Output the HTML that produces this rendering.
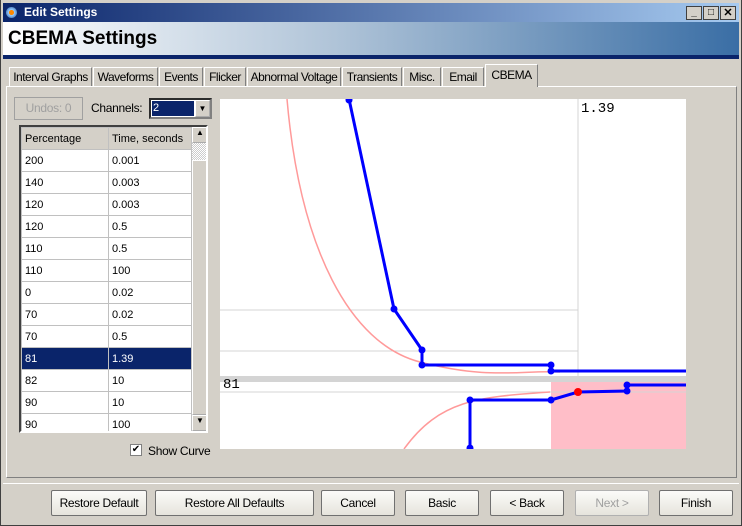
<!DOCTYPE html><html><head><style>
*{box-sizing:border-box;margin:0;padding:0}
body{width:742px;height:526px;background:#d4d0c8;font-family:"Liberation Sans",sans-serif;font-size:11px;position:relative;overflow:hidden;white-space:nowrap}
.a{position:absolute}
.btn{position:absolute;top:490px;height:26px;background:linear-gradient(#fbfbf9,#e6e4dc);border:1px solid #707070;border-radius:2px;text-align:center;line-height:24px;font-size:12px;letter-spacing:-0.3px}
.tab{position:absolute;top:67px;height:20px;border:1px solid #fff;border-right-color:#808080;border-bottom:none;line-height:18px;font-size:12px;letter-spacing:-0.5px;background:#d4d0c8;text-align:center;overflow:hidden}
table{border-collapse:collapse;font-size:11px}
td{border:1px solid #c0c0c0;height:22px;padding-left:3px;overflow:hidden}
</style></head><body>
<div class="a" style="left:0;top:0;width:742px;height:526px;border:1px solid #404040;border-top:none"></div>
<div class="a" style="left:3px;top:3px;width:736px;height:19px;background:linear-gradient(90deg,#0a246a,#a6caf0);color:#fff;font-weight:bold;font-size:12px;line-height:19px;padding-left:21px">Edit Settings</div>
<div class="a" style="left:6px;top:7px;width:11px;height:11px;border-radius:50%;background:radial-gradient(circle,#f80 30%,#9cf 35%,#36a 90%)"></div>
<div class="a" style="left:686px;top:6px;width:16px;height:14px;background:#d4d0c8;border:1px solid #404040;font-size:10px;text-align:center;line-height:12px;font-weight:bold">_</div>
<div class="a" style="left:703px;top:6px;width:16px;height:14px;background:#d4d0c8;border:1px solid #404040;font-size:10px;text-align:center;line-height:12px">□</div>
<div class="a" style="left:720px;top:6px;width:16px;height:14px;background:#d4d0c8;border:1px solid #404040;font-size:11px;text-align:center;line-height:12px;font-weight:bold">✕</div>
<div class="a" style="left:3px;top:22px;width:736px;height:33px;background:linear-gradient(90deg,#fff,#b0c4d8 45%,#3a6ea5);font-weight:bold;font-size:19px;line-height:33px;padding-left:5px">CBEMA Settings</div>
<div class="a" style="left:3px;top:55px;width:736px;height:4px;background:#0a246a"></div>
<div class="tab" style="left:9px;width:83px">Interval Graphs</div>
<div class="tab" style="left:93px;width:65px">Waveforms</div>
<div class="tab" style="left:159px;width:44px">Events</div>
<div class="tab" style="left:204px;width:42px">Flicker</div>
<div class="tab" style="left:247px;width:94px">Abnormal Voltage</div>
<div class="tab" style="left:342px;width:60px">Transients</div>
<div class="tab" style="left:403px;width:38px">Misc.</div>
<div class="tab" style="left:442px;width:42px">Email</div>
<div class="a" style="left:6px;top:86px;width:731px;height:392px;border:1px solid #fff;border-right-color:#808080;border-bottom-color:#808080"></div>
<div class="tab" style="left:485px;top:64px;height:23px;width:53px;line-height:20px">CBEMA</div>
<div class="a" style="left:14px;top:97px;width:69px;height:23px;border:1px solid #a0a0a0;color:#a0a0a0;text-align:center;line-height:21px;background:#d4d0c8;font-size:12px;letter-spacing:-0.3px">Undos: 0</div>
<div class="a" style="left:91px;top:101px;font-size:12px;letter-spacing:-0.3px">Channels:</div>
<div class="a" style="left:149px;top:98px;width:63px;height:21px;border:2px inset #808080;background:#fff"><div class="a" style="left:1px;top:1px;width:42px;height:15px;background:#0a246a;color:#fff;line-height:15px;padding-left:1px">2</div><div class="a" style="right:0;top:0;width:15px;height:17px;background:#d4d0c8;border:1px outset #fff;font-size:8px;text-align:center;line-height:15px">▼</div></div>
<div class="a" style="left:19px;top:125px;width:189px;height:308px;border:2px solid #404040;border-right-color:#fff;border-bottom-color:#fff;background:#fff;overflow:hidden">
<table style="width:171px;table-layout:fixed">
<tr style="background:#d4d0c8"><td style="width:87px;height:20px">Percentage</td><td>Time, seconds</td></tr>
<tr><td>200</td><td>0.001</td></tr><tr><td>140</td><td>0.003</td></tr><tr><td>120</td><td>0.003</td></tr><tr><td>120</td><td>0.5</td></tr><tr><td>110</td><td>0.5</td></tr><tr><td>110</td><td>100</td></tr><tr><td>0</td><td>0.02</td></tr><tr><td>70</td><td>0.02</td></tr><tr><td>70</td><td>0.5</td></tr>
<tr style="background:#0a246a;color:#fff"><td>81</td><td>1.39</td></tr>
<tr><td>82</td><td>10</td></tr><tr><td>90</td><td>10</td></tr><tr><td>90</td><td>100</td></tr>
</table>
<div class="a" style="left:171px;top:0;width:16px;height:304px;background:#e8e6e0"><div style="height:16px;background:#d4d0c8;border:1px outset #fff;font-size:8px;text-align:center">▲</div><div style="height:17px;background:repeating-conic-gradient(#fff 0 25%,#ccc 0 50%) 0 0/2px 2px"></div><div class="a" style="width:16px;height:255px;background:#d4d0c8;border:1px outset #fff;top:33px"></div><div class="a" style="bottom:0;width:16px;height:16px;background:#d4d0c8;border:1px outset #fff;font-size:8px;text-align:center">▼</div></div>
</div>
<div class="a" style="left:130px;top:444px;width:12px;height:12px;border:1px solid #808080;background:#fff;font-size:10px;line-height:10px;text-align:center">✔</div>
<div class="a" style="left:148px;top:444px;font-size:12px;letter-spacing:-0.3px">Show Curve</div>
<svg class="a" style="left:220px;top:99px" width="466" height="350">
<rect width="466" height="350" fill="#fff"/>
<rect x="331" y="283" width="135" height="67" fill="#ffbec8"/>
<rect x="0" y="277" width="466" height="6" fill="#d4d4d4"/>
<g stroke="#d4d4d4" fill="none"><line x1="358" y1="0" x2="358" y2="277"/><line x1="0" y1="211" x2="358" y2="211"/><line x1="0" y1="252" x2="358" y2="252"/><line x1="0" y1="293" x2="466" y2="293"/></g>
<g stroke="#ff9a9a" stroke-width="1.5" fill="none"><path d="M67 0 C80 150,130 245,200 263 S300 271,340 273"/><path d="M184 350 C220 300,260 298,330 293"/></g>
<g stroke="#0000ff" stroke-width="3" fill="none"><path d="M129 0 L174 210 L202 251 L202 266 L331 266"/><path d="M331 272 L466 272"/><path d="M250 350 L250 301 L331 301 L358 293 L407 292 L407 286 L466 286"/></g>
<g fill="#0000ff"><circle cx="129" cy="1" r="3.5"/><circle cx="174" cy="210" r="3.5"/><circle cx="202" cy="251" r="3.5"/><circle cx="202" cy="266" r="3.5"/><circle cx="331" cy="266" r="3.5"/><circle cx="331" cy="272" r="3.5"/><circle cx="250" cy="301" r="3.5"/><circle cx="250" cy="349" r="3.5"/><circle cx="331" cy="301" r="3.5"/><circle cx="407" cy="292" r="3.5"/><circle cx="407" cy="286" r="3.5"/></g>
<circle cx="358" cy="293" r="4" fill="#f00"/>
<text x="361" y="13" font-family="Liberation Mono,monospace" font-size="14">1.39</text>
<text x="3" y="289" font-family="Liberation Mono,monospace" font-size="14">81</text>
</svg>
<div class="a" style="left:3px;top:483px;width:736px;height:1px;background:#808080;border-bottom:1px solid #fff"></div>
<div class="btn" style="left:51px;width:96px">Restore Default</div>
<div class="btn" style="left:155px;width:159px">Restore All Defaults</div>
<div class="btn" style="left:321px;width:74px">Cancel</div>
<div class="btn" style="left:405px;width:74px">Basic</div>
<div class="btn" style="left:490px;width:74px">&lt; Back</div>
<div class="btn" style="left:575px;width:74px;color:#a0a0a0;border-color:#b0b0b0">Next &gt;</div>
<div class="btn" style="left:659px;width:74px">Finish</div>
</body></html>
